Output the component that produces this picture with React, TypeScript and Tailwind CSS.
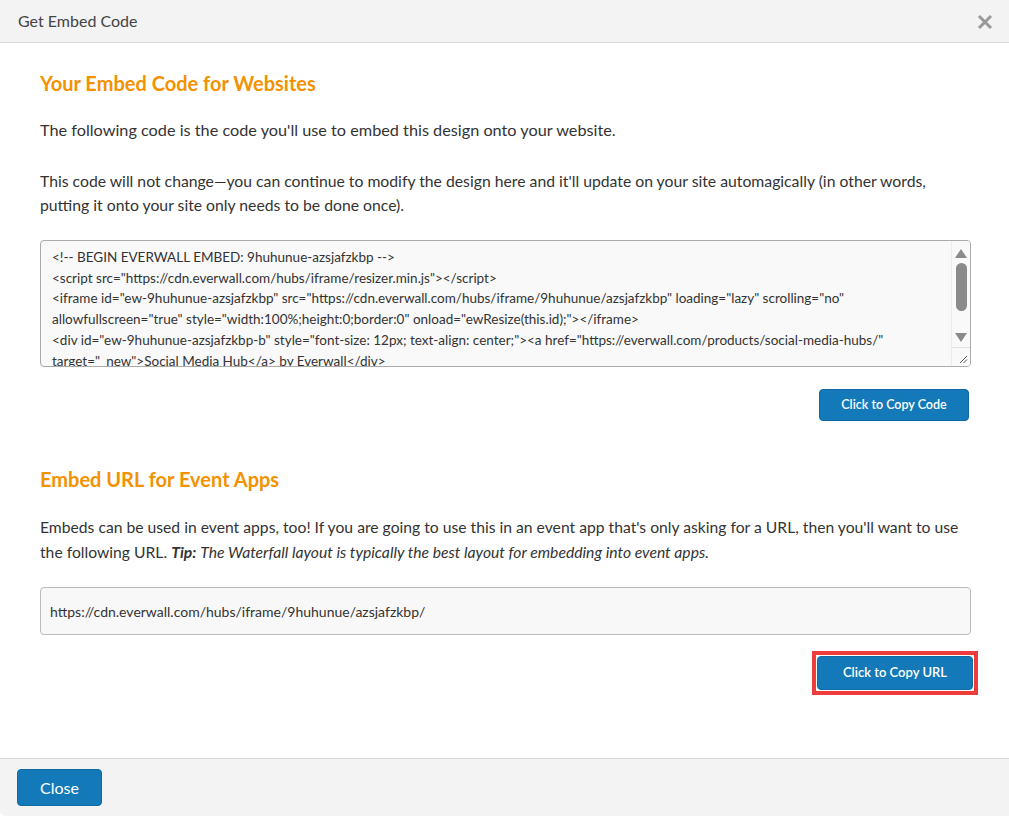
import React from "react";

const code = `<!-- BEGIN EVERWALL EMBED: 9huhunue-azsjafzkbp -->
<script src="https://cdn.everwall.com/hubs/iframe/resizer.min.js"></script>
<iframe id="ew-9huhunue-azsjafzkbp" src="https://cdn.everwall.com/hubs/iframe/9huhunue/azsjafzkbp" loading="lazy" scrolling="no" allowfullscreen="true" style="width:100%;height:0;border:0" onload="ewResize(this.id);"></iframe>
<div id="ew-9huhunue-azsjafzkbp-b" style="font-size: 12px; text-align: center;"><a href="https://everwall.com/products/social-media-hubs/" target="_new">Social Media Hub</a> by Everwall</div>
<!-- END EVERWALL EMBED -->`;

const font = { fontFamily: "Lato, 'Open Sans', sans-serif" };

function CodeBox() {
  return (
    <div className="mt-[23px] flex w-[931px] h-[127px] bg-[#f9f9f9] border border-[#aaa] rounded-[4px] overflow-hidden">
      <div className="flex-1 overflow-hidden pl-[11px] pr-[6px] pt-[6px] text-[13.5px] leading-[20.7px] text-[#333] whitespace-pre-wrap break-words">
        {code}
      </div>
      {/* scrollbar */}
      <div className="w-[19px] shrink-0 flex flex-col border-l border-[#ececec] bg-[#f9f9f9]">
        <div className="h-[22px] flex items-center justify-center pt-[2px]">
          <svg width="12" height="9" viewBox="0 0 12 9">
            <path d="M6 0L12 9H0Z" fill="#8a8a8a" />
          </svg>
        </div>
        <div className="flex justify-center">
          <div className="w-[11px] h-[48px] rounded-full bg-[#8a8a8a]" />
        </div>
        <div className="flex-1 flex items-end justify-center pb-[5px]">
          <svg width="12" height="9" viewBox="0 0 12 9">
            <path d="M0 0H12L6 9Z" fill="#8a8a8a" />
          </svg>
        </div>
        <div className="h-[19px] border-t border-[#e2e2e2] flex items-end justify-end pr-[2px] pb-[2px]">
          <svg width="9" height="9" viewBox="0 0 9 9">
            <path d="M1 8L8 1M4.5 8L8 4.5" stroke="#555" strokeWidth="1" />
          </svg>
        </div>
      </div>
    </div>
  );
}

export default function App() {
  return (
    <div className="w-[1009px] h-[816px] bg-white flex flex-col text-[#333]" style={font}>
      {/* header */}
      <div className="h-[43px] shrink-0 bg-[#f3f3f3] border-b border-[#d9d9d9] flex items-center justify-between pl-[18px] pr-[16px]">
        <span className="text-[16px] text-[#444]">Get Embed Code</span>
        <svg width="16" height="16" viewBox="0 0 16 16" className="mt-[1px]">
          <path d="M2 2L14 14M14 2L2 14" stroke="#999" strokeWidth="3" />
        </svg>
      </div>

      {/* body */}
      <div className="flex-1 px-[40px] pt-[26px]">
        <h2 className="text-[20px] font-bold text-[#f39200] leading-[28px]">Your Embed Code for Websites</h2>
        <p className="mt-[21px] text-[16.25px] leading-[24px]">
          The following code is the code you'll use to embed this design onto your website.
        </p>
        <p className="mt-[27px] text-[15.75px] leading-[24px]">
          This code will not change—you can continue to modify the design here and it'll update on your site automagically (in other words, putting it onto your site only needs to be done once).
        </p>
        <CodeBox />
        <div className="flex justify-end mt-[22px]">
          <button className="w-[150px] h-[32px] bg-[#1479b8] border border-[#0f6aa3] rounded-[4px] text-white text-[12.5px] font-semibold">
            Click to Copy Code
          </button>
        </div>

        <h2 className="mt-[44px] text-[20px] font-bold text-[#f39200] leading-[28px]">Embed URL for Event Apps</h2>
        <p className="mt-[22px] text-[15.7px] leading-[25px]">
          Embeds can be used in event apps, too! If you are going to use this in an event app that's only asking for a URL, then you'll want to use the following URL.{" "}
          <b className="italic">Tip:</b>{" "}
          <i>The Waterfall layout is typically the best layout for embedding into event apps.</i>
        </p>
        <div className="mt-[22px] h-[48px] w-[931px] bg-[#f8f8f8] border border-[#bbb] rounded-[4px] flex items-center px-[9px] text-[14px]">
          https://cdn.everwall.com/hubs/iframe/9huhunue/azsjafzkbp/
        </div>
        <div className="flex justify-end mt-[16px] mr-[-9px]">
          <div className="border-[4px] border-[#ee3b3b] p-[1px]">
            <button className="w-[156px] h-[34px] bg-[#1479b8] border border-[#0f6aa3] rounded-[4px] text-white text-[13px] font-semibold block">
              Click to Copy URL
            </button>
          </div>
        </div>
      </div>

      {/* footer */}
      <div className="h-[58px] shrink-0 bg-[#f3f3f3] border-t border-[#d9d9d9] flex items-center pl-[17px] rounded-bl-[6px]">
        <button className="w-[85px] h-[37px] bg-[#1479b8] border border-[#0f6aa3] rounded-[4px] text-white text-[16px]">
          Close
        </button>
      </div>
    </div>
  );
}
